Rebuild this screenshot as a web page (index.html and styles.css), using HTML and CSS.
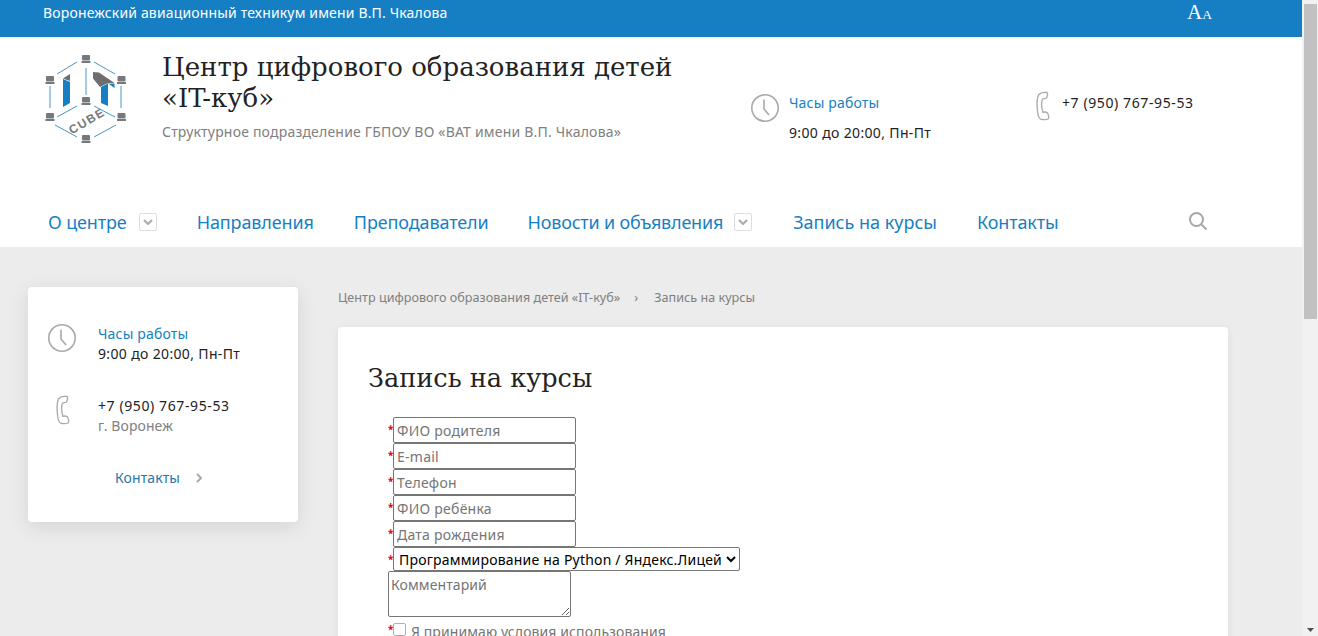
FILE: index.html
```html
<!DOCTYPE html>
<html lang="ru">
<head>
<meta charset="utf-8">
<title>Запись на курсы</title>
<link rel="stylesheet" href="styles.css">
</head>
<body>
<div class="page">
  <div class="topbar">
    <span class="topbar-name">Воронежский авиационный техникум имени В.П. Чкалова</span>
    <span class="font-switch"><span class="aa-big">A</span><span class="aa-small">A</span></span>
  </div>
  <header class="header">
    <div class="brand">
      <svg class="logo" viewBox="0 0 110 105" width="110" height="105">
        <path class="logo-lines" d="M27 29 47 17M64 17 85 29M20 41V63M91 41V63M56 23V50M27 72 47 61M64 61 85 72M25 80 47 92M64 92 86 80"/>
        <path class="logo-blue" d="M33 34 40 37V58L33 62Z"/>
        <path class="logo-gray" d="M33 33.5 40 29V36Z"/>
        <path class="logo-blue" d="M71 42 78 38.5V61L71 58ZM79 39 84.5 38.5V43Z"/>
        <path class="logo-gray" d="M63 27 69 27.5 84.5 38 77 38.5 70 42 63 33.5Z"/>
        <g class="logo-nodes">
          <rect x="52" y="10" width="8" height="5.5" rx="1"/><rect x="51.5" y="16" width="9" height="2"/>
          <rect x="16" y="31" width="8" height="5.5" rx="1"/><rect x="15.5" y="37" width="9" height="2"/>
          <rect x="87.5" y="31" width="8" height="5.5" rx="1"/><rect x="87" y="37" width="9" height="2"/>
          <rect x="52" y="52" width="8" height="5.5" rx="1"/><rect x="51.5" y="58" width="9" height="2"/>
          <rect x="16" y="68" width="8" height="5.5" rx="1"/><rect x="15.5" y="74" width="9" height="2"/>
          <rect x="87.5" y="68" width="8" height="5.5" rx="1"/><rect x="87" y="74" width="9" height="2"/>
          <rect x="52" y="90" width="8" height="5.5" rx="1"/><rect x="51.5" y="96" width="9" height="2"/>
        </g>
        <text class="logo-text" x="57" y="80" text-anchor="middle" transform="rotate(-30 57 76)">CUBE</text>
      </svg>
      <div class="brand-text">
        <div class="brand-title">Центр цифрового образования детей<br>«IT-куб»</div>
        <div class="brand-sub">Структурное подразделение ГБПОУ ВО «ВАТ имени В.П. Чкалова»</div>
      </div>
    </div>
    <div class="hours">
      <svg class="clock" viewBox="0 0 30 30" width="30" height="30"><circle cx="15" cy="15" r="13.2"/><path d="M14 6.5V16L19 22"/></svg>
      <div>
        <div class="link-label">Часы работы</div>
        <div class="hours-value">9:00 до 20:00, Пн-Пт</div>
      </div>
    </div>
    <div class="phone">
      <svg class="phone-icon" viewBox="0 0 14 30" width="14" height="30"><path d="M11 1.5C7 1 4 2 2.5 4 1 7 1 15 1.5 20 2 25 3 28.5 6 28.5 8 28.8 11 28.5 12 28 13 27 12.5 24 11.5 22 10 20.8 8 21 7 21.5 5.5 18 5 11 6.5 8 8 7.5 9.5 7.5 10.5 7 11.5 5 12 2.5 11 1.5Z"/></svg>
      <div class="phone-number">+7 (950) 767-95-53</div>
    </div>
  </header>
  <nav class="nav">
    <a class="nav-item">О центре<span class="chev-box"><svg viewBox="0 0 10 6" width="10" height="6"><path d="M1 1 5 5 9 1"/></svg></span></a>
    <a class="nav-item">Направления</a>
    <a class="nav-item nav-teachers">Преподаватели</a>
    <a class="nav-item nav-news">Новости и объявления<span class="chev-box"><svg viewBox="0 0 10 6" width="10" height="6"><path d="M1 1 5 5 9 1"/></svg></span></a>
    <a class="nav-item nav-courses">Запись на курсы</a>
    <a class="nav-item">Контакты</a>
    <svg class="search" viewBox="0 0 20 20" width="20" height="20"><circle cx="8.5" cy="8.5" r="6.5"/><path d="M13.5 13.5 18.5 18.5"/></svg>
  </nav>
  <div class="content">
    <aside class="side-card">
      <div class="side-row">
        <svg class="clock" viewBox="0 0 30 30" width="30" height="30"><circle cx="15" cy="15" r="13.2"/><path d="M14 6.5V16L19 22"/></svg>
        <div class="side-text">
          <div class="link-label">Часы работы</div>
          <div class="side-dark side-hours">9:00 до 20:00, Пн-Пт</div>
        </div>
      </div>
      <div class="side-row side-row-phone">
        <svg class="phone-icon" viewBox="0 0 14 30" width="14" height="30"><path d="M11 1.5C7 1 4 2 2.5 4 1 7 1 15 1.5 20 2 25 3 28.5 6 28.5 8 28.8 11 28.5 12 28 13 27 12.5 24 11.5 22 10 20.8 8 21 7 21.5 5.5 18 5 11 6.5 8 8 7.5 9.5 7.5 10.5 7 11.5 5 12 2.5 11 1.5Z"/></svg>
        <div class="side-text">
          <div class="side-dark side-phone">+7 (950) 767-95-53</div>
          <div class="side-gray">г. Воронеж</div>
        </div>
      </div>
      <a class="side-link">Контакты<svg viewBox="0 0 6 10" width="6" height="10"><path d="M1 1 5 5 1 9"/></svg></a>
    </aside>
    <main class="main">
      <div class="crumbs"><span>Центр цифрового образования детей «IT-куб»</span><span class="crumb-sep">›</span><span>Запись на курсы</span></div>
      <section class="card">
        <h1 class="card-title">Запись на курсы</h1>
        <form class="form">
          <div class="row"><span class="req">*</span><input class="field" placeholder="ФИО родителя"></div>
          <div class="row"><span class="req">*</span><input class="field" placeholder="E-mail"></div>
          <div class="row"><span class="req">*</span><input class="field" placeholder="Телефон"></div>
          <div class="row"><span class="req">*</span><input class="field" placeholder="ФИО ребёнка"></div>
          <div class="row"><span class="req">*</span><input class="field" placeholder="Дата рождения"></div>
          <div class="row row-select"><span class="req">*</span><select class="select"><option>Программирование на Python / Яндекс.Лицей</option></select></div>
          <textarea class="area" placeholder="Комментарий"></textarea>
          <label class="row row-check"><span class="req req-check">*</span><input class="check" type="checkbox"><span class="check-label">Я принимаю условия использования</span></label>
        </form>
      </section>
    </main>
  </div>
</div>
<div class="scrollbar"><div class="thumb"></div><svg class="scroll-down" viewBox="0 0 7 4" width="7" height="4"><path d="M0 0H7L3.5 4Z"/></svg></div>
</body>
</html>
```
FILE: styles.css
```css
* { box-sizing: border-box; }
html, body { margin: 0; height: 100%; overflow: hidden; }
body { display: flex; font-family: "Noto Sans", sans-serif; background: #ececec; }
.page { width: 1302px; height: 636px; overflow: hidden; flex: none; }
.scrollbar { width: 16px; height: 636px; background: #f1f1f1; padding: 4px 1px 0 2px; position: relative; flex: none; }
.thumb { height: 315px; background: #c1c1c1; }
.scroll-down { position: absolute; left: 5px; bottom: 4px; fill: #505050; }

.topbar { height: 37px; background: #167fc4; color: #fff; display: flex; justify-content: space-between; padding: 0 90px 0 43px; font-size: 14px; line-height: 26px; letter-spacing: .16px; }
.font-switch { font-family: "Liberation Serif", serif; line-height: 24px; letter-spacing: 0; }
.aa-big { font-size: 21px; }
.aa-small { font-size: 13.5px; }

.header { height: 160px; background: #fff; display: flex; align-items: flex-start; }
.brand { display: flex; width: 750px; padding: 8px 0 0 30px; }
.logo { flex: none; }
.logo-lines { fill: none; stroke: #4a94c9; stroke-width: 1; }
.logo-blue { fill: #167fc4; }
.logo-gray { fill: #6d6e70; }
.logo-nodes { fill: #77787b; }
.logo-text { font: bold 12px "Liberation Sans", sans-serif; fill: #77787b; letter-spacing: 1.5px; }
.brand-text { margin-left: 22px; }
.brand-title { font-family: "DejaVu Serif", serif; font-size: 26px; line-height: 31px; color: #222; margin-top: 7px; }
.brand-sub { font-size: 14px; color: #808080; margin-top: 8px; line-height: 20px; letter-spacing: .2px; }
.hours { display: flex; gap: 9px; width: 285px; padding-top: 56px; }
.clock { fill: none; stroke: #a9a9a9; stroke-width: 1.6; flex: none; }
.link-label { color: #167fc4; font-size: 14px; line-height: 20px; letter-spacing: .18px; }
.hours-value { color: #222; font-size: 14px; line-height: 20px; margin-top: 10px; letter-spacing: .35px; }
.phone { display: flex; gap: 12px; padding: 54px 0 0 1px; }
.phone-icon { fill: none; stroke: #a9a9a9; stroke-width: 1.3; flex: none; }
.phone-number { font-size: 14px; color: #222; line-height: 20px; letter-spacing: .6px; margin-top: 2px; }

.nav { height: 50px; background: #fff; display: flex; align-items: center; padding: 0 0 1px 48px; position: relative; }
.nav-item { color: #167fc4; font-size: 18px; display: flex; align-items: center; margin-right: 40px; letter-spacing: -.12px; }
.nav-teachers { margin-right: 39px; }
.nav-news { letter-spacing: -.2px; margin-right: 41px; }
.nav-news .chev-box { margin-left: 11px; }
.nav-courses { letter-spacing: 0; }
.chev-box { width: 18px; height: 18px; border: 1px solid #ddd; border-radius: 2px; margin-left: 12px; display: flex; align-items: center; justify-content: center; }
.chev-box svg { fill: none; stroke: #aaa; stroke-width: 2; }
.search { position: absolute; left: 1188px; top: 14px; fill: none; stroke: #a6a6a6; stroke-width: 2; }

.content { display: flex; padding: 40px 0 0 28px; align-items: flex-start; }
.side-card { width: 270px; height: 235px; background: #fff; border-radius: 4px; box-shadow: 0 5px 20px rgba(0,0,0,.1); padding: 36px 20px 0 19px; margin-right: 40px; }
.side-row { display: flex; gap: 21px; }
.side-row-phone { margin-top: 31px; padding-left: 9px; gap: 28px; }
.side-text { font-size: 14px; line-height: 20px; padding-top: 1px; }
.side-dark { color: #222; }
.side-hours { letter-spacing: .35px; }
.side-phone { letter-spacing: .6px; }
.side-gray { color: #808080; letter-spacing: .1px; }
.side-link { display: flex; align-items: center; gap: 16px; color: #2c76a8; font-size: 14px; margin: 32px 0 0 68px; letter-spacing: .1px; }
.side-link svg { fill: none; stroke: #aaa; stroke-width: 2; }

.main { width: 890px; }
.crumbs { height: 40px; font-size: 12.6px; color: #808080; line-height: 21px; display: flex; letter-spacing: .02px; }
.crumb-sep { margin: 0 16px 0 14px; }
.card { background: #fff; border-radius: 4px; box-shadow: 0 2px 10px rgba(0,0,0,.06); padding: 33px 30px 0; height: 320px; }
.card-title { font-family: "DejaVu Serif", serif; font-weight: 400; font-size: 25.6px; line-height: 36px; margin: 0 0 21px; color: #222; }
.form { padding-left: 20px; font-size: 14px; }
.row { display: flex; height: 26px; }
.req { color: #d00; width: 5px; font-size: 10px; line-height: 24px; font-weight: 700; }
.req-check { line-height: 12px; }
.field { width: 183px; height: 26px; font: 14px "Noto Sans", sans-serif; padding: 1px 3px; border: 1px solid #767676; border-radius: 2px; letter-spacing: .25px; }
.field::placeholder, .area::placeholder { color: #757575; }
.row-select { height: 24px; }
.select { width: 347px; height: 24px; font: 14px "Noto Sans", sans-serif; color: #000; border: 1px solid #767676; border-radius: 2px; background: #fff; padding: 0 0 0 1px; letter-spacing: .2px; }
.area { display: block; width: 183px; height: 46px; font: 14px "Noto Sans", sans-serif; padding: 3px 2px 2px; border: 1px solid #767676; border-radius: 2px; letter-spacing: .1px; }
.row-check { margin-top: 6px; color: #757575; align-items: flex-start; }
.check { appearance: none; width: 13px; height: 13px; margin: 0 5px 0 0; border: 1px solid #b0b0b0; border-radius: 2px; background: #fff; }
.check-label { line-height: 15px; letter-spacing: .1px; padding-top: 1px; }
```
